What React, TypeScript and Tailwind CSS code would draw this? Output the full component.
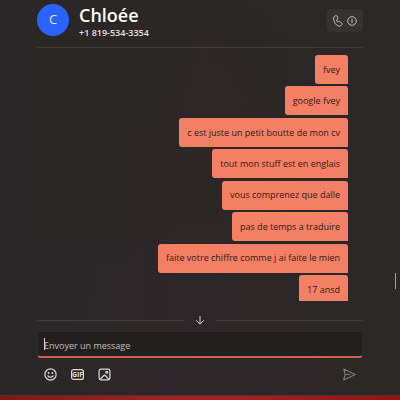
const messages = [
  'fvey',
  'google fvey',
  'c est juste un petit boutte de mon cv',
  'tout mon stuff est en englais',
  'vous comprenez que dalle',
  'pas de temps a traduire',
  'faite votre chiffre comme j ai faite le mien',
  '17 ansd',
];

function PhoneIcon() {
  return (
    <svg className="h-3 w-3" viewBox="0 0 12 12" fill="none" stroke="currentColor" strokeWidth="1" strokeLinejoin="round">
      <path d="M3.2.8h1.300c.8 0 1.300.6 1.300 1.400v1.200c0 .8-.5 1.300-1.300 1.400.1.900.5 1.600 1.200 2.200.6-.6 1.300-.7 2-.3l1.600 1c.8.5.9 1.200.4 1.900l-.6.9c-.5.700-1.400.9-2.400.6C3.700 10.100 2 7.400 1.700 4.100 1.600 2.300 2.100 1.100 3.200.8Z" />
    </svg>
  );
}

function InfoIcon() {
  return (
    <svg className="h-3 w-3" viewBox="0 0 12 12" fill="none" stroke="currentColor">
      <circle cx="6" cy="6" r="4.300" />
      <path d="M6 3.800v4.400" />
    </svg>
  );
}

function SmileIcon() {
  return (
    <svg className="h-[13px] w-[13px]" viewBox="0 0 13 13" fill="none" stroke="currentColor" strokeWidth="1.200" strokeLinecap="round">
      <circle cx="6.500" cy="6.500" r="5.600" />
      <path d="M3.900 7.900c1.200 1.800 4 1.800 5.200 0" />
      <circle cx="4.600" cy="5" r=".9" fill="currentColor" stroke="none" />
      <circle cx="8.400" cy="5" r=".9" fill="currentColor" stroke="none" />
    </svg>
  );
}

function GifIcon() {
  return (
    <svg className="h-[13px] w-[13px]" viewBox="0 0 13 13" fill="none" stroke="currentColor" strokeWidth="1.200">
      <rect x=".6" y="1.600" width="11.800" height="9.800" rx="2" />
      <text x="6.500" y="9" textAnchor="middle" fontSize="7" fontWeight="700" fill="currentColor" stroke="none">
        GIF
      </text>
    </svg>
  );
}

function ImageIcon() {
  return (
    <svg className="h-[13px] w-[13px]" viewBox="0 0 13 13" fill="none" stroke="currentColor" strokeWidth="1.200" strokeLinejoin="round">
      <rect x="1.100" y="1.100" width="10.800" height="10.800" rx="1.800" />
      <path d="m2.200 11.200 3.700-3.700c.4-.4.9-.4 1.300 0l3.700 3.700" />
      <circle cx="8.700" cy="4.300" r=".9" />
    </svg>
  );
}

function SendIcon() {
  return (
    <svg className="h-[13px] w-[13px]" viewBox="0 0 13 13" fill="none" stroke="currentColor" strokeWidth="1.100" strokeLinejoin="round">
      <path d="M.7 1 12.300 6.500.7 12l1.500-5.500Z" />
      <path d="M2.200 6.500h5.300" />
    </svg>
  );
}

export default function App() {
  return (
    <div className="relative flex min-h-screen flex-col bg-linear-to-b from-[#2c2727] via-[#2d2626] to-[#2f262a] font-['Open_Sans','Noto_Sans',sans-serif] text-white">
      <main className="flex flex-1 flex-col bg-linear-to-r from-[#292727] via-transparent to-[#2b2827] px-[37px]">
        <header className="flex h-12 items-start gap-[10px] border-b border-[#413b3b] pt-1">
          <div className="flex h-8 w-8 items-center justify-center rounded-full bg-[#2962ff] text-[13px] text-[#e4eaff]">
            C
          </div>
          <div className="pt-px">
            <h1 className="text-[18px] leading-5 font-semibold">Chloée</h1>
            <p className="text-[9px] leading-4 font-semibold text-[#e6e2e2]">+1 819-534-3354</p>
          </div>
          <div className="mt-[5px] ml-auto flex h-[23px] items-center gap-[2px] rounded bg-[#373232] px-[5px] text-[#c4c0c0]">
            <button aria-label="Appeler">
              <PhoneIcon />
            </button>
            <button aria-label="Informations">
              <InfoIcon />
            </button>
          </div>
        </header>

        {/* Messages */}
        <section className="mt-[7px] h-[246px] overflow-hidden pr-[15px]">
          <ul className="flex h-[249px] flex-col items-end justify-between">
            {messages.map((message) => (
              <li
                key={message}
                className="flex h-[29px] items-center rounded-[3px] rounded-br-none bg-[#f38065] px-2 text-[9px] whitespace-nowrap text-[#351812]"
              >
                {message}
              </li>
            ))}
          </ul>
        </section>

        <div className="mt-[11px] flex h-4 items-center gap-[10px]">
          <div className="h-px flex-1 bg-[#453d3e]" />
          <button aria-label="Aller en bas" className="text-[#d0cccc]">
            <svg className="h-3 w-3" viewBox="0 0 12 12" fill="none" stroke="currentColor">
              <path d="M6 2v8M2 6.200l4 4 4-4" />
            </svg>
          </button>
          <div className="h-px flex-1 bg-[#453d3e]" />
        </div>

        {/* Zone de saisie */}
        <div className="relative mt-[3px] h-[27px] overflow-hidden rounded border border-b-2 border-[#312c2c] border-b-[#c9654f] bg-[#21201f]">
          <input
            type="text"
            aria-label="Envoyer un message"
            placeholder="Envoyer un message"
            className="block h-full w-full bg-transparent px-[6px] pt-[3px] text-[9px] text-white outline-none placeholder:text-[#c0bcbc]"
          />
          <span className="absolute top-[6px] left-[6px] h-3 w-px bg-[#d6d2d2]" />
        </div>

        <div className="mt-[10px] flex items-center gap-[14px] px-[7px] text-[#dedada]">
          <button aria-label="Emoji">
            <SmileIcon />
          </button>
          <button aria-label="GIF">
            <GifIcon />
          </button>
          <button aria-label="Image">
            <ImageIcon />
          </button>
          <button aria-label="Envoyer" className="ml-auto text-[#817679]">
            <SendIcon />
          </button>
        </div>
      </main>
      <div className="h-[5px] border-t border-[#53302f] bg-linear-to-r from-[#84150f] via-[#a52324] to-[#96100f]" />
      <div className="absolute top-[273px] right-1 h-4 w-px bg-[#a29e9e]" />
    </div>
  );
}
